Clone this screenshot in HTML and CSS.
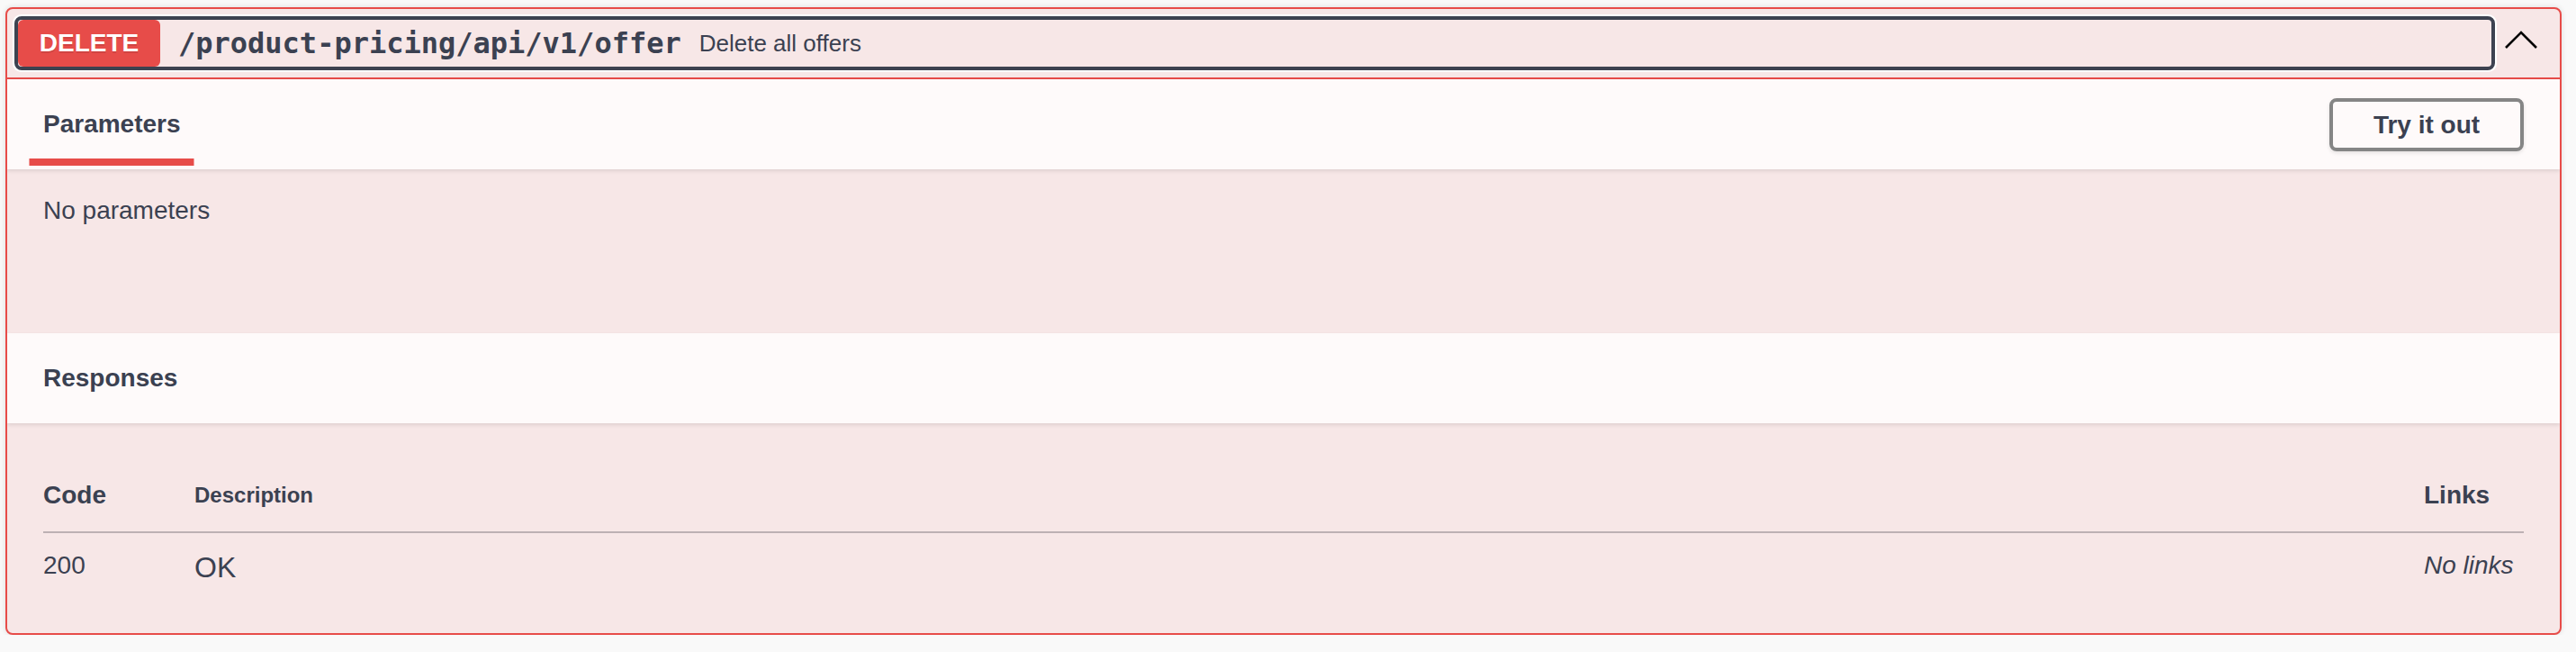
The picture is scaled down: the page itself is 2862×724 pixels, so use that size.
FILE: index.html
```html
<!DOCTYPE html>
<html lang="en">
<head>
<meta charset="utf-8">
<title>DELETE /product-pricing/api/v1/offer</title>
<link rel="stylesheet" href="styles.css">
</head>
<body>
<div class="opblock">
  <div class="summary">
    <button class="summary-control" type="button">
      <span class="method">DELETE</span>
      <span class="path">/product-pricing/api/v1/offer</span>
      <span class="summary-desc">Delete all offers</span>
    </button>
    <button class="arrow" type="button" aria-label="Collapse">
      <svg width="40" height="40" viewBox="0 0 40 40"><polyline points="3,25 20,8 37,25" fill="none" stroke="#000" stroke-width="2.6" stroke-linecap="butt" stroke-linejoin="miter"/></svg>
    </button>
  </div>
  <div class="section-header">
    <div class="tab"><h4><span>Parameters</span></h4></div>
    <button class="try-btn" type="button">Try it out</button>
  </div>
  <div class="params-body">
    <p>No parameters</p>
  </div>
  <div class="section-header">
    <h4 class="resp-title">Responses</h4>
  </div>
  <div class="responses-inner">
    <table class="responses-table">
      <colgroup><col class="c-code"><col><col class="c-links"></colgroup>
      <thead>
        <tr><td class="col-status">Code</td><td class="col-desc">Description</td><td class="col-links">Links</td></tr>
      </thead>
      <tbody>
        <tr><td class="status">200</td><td class="desc">OK</td><td class="links"><i>No links</i></td></tr>
      </tbody>
    </table>
  </div>
</div>
</body>
</html>
```
FILE: styles.css
```css
* { box-sizing: border-box; }
html, body { margin: 0; }
body {
  background: #f9f9f9;
  padding: 8px 16px 0 6px;
  font-family: "Liberation Sans", Arial, sans-serif;
  color: #3b4151;
}
.opblock {
  border: 2px solid #e74c49;
  border-radius: 8px;
  background: #f7e7e7;
  box-shadow: 0 0 6px rgba(0,0,0,.12);
  overflow: hidden;
}
.summary {
  display: flex;
  align-items: center;
  padding: 12px 10px 12px 12px;
  border-bottom: 2px solid #e74c49;
}
.summary-control {
  flex: 1;
  display: flex;
  align-items: center;
  height: 52px;
  padding: 0;
  margin: 0;
  border: 0;
  background: transparent;
  border-radius: 4px;
  outline: 4px solid #3d4250;
  outline-offset: 0;
  box-shadow: 0 0 0 6px #fff;
  text-align: left;
  color: #3b4151;
  font-family: inherit;
}
.method {
  flex: none;
  width: 158px;
  height: 52px;
  line-height: 52px;
  background: #e74c49;
  color: #fff;
  border-radius: 6px;
  font-size: 28px;
  font-weight: 700;
  text-align: center;
  text-shadow: 0 2px 0 rgba(0,0,0,.1);
}
.path {
  padding: 0 20px;
  font-family: "DejaVu Sans Mono", monospace;
  font-weight: 700;
  font-size: 32px;
  color: #3b4151;
}
.summary-desc {
  font-size: 26px;
  color: #3b4151;
}
.arrow {
  flex: none;
  width: 66px;
  height: 52px;
  padding: 0;
  border: 0;
  background: transparent;
  display: flex;
  align-items: center;
  justify-content: center;
}
.arrow svg { display: block; }
.section-header {
  height: 100px;
  padding: 0 40px;
  display: flex;
  align-items: center;
  justify-content: space-between;
  background: rgba(255,255,255,.8);
  box-shadow: 0 2px 4px rgba(0,0,0,.1);
  position: relative;
}
.section-header h4 {
  margin: 0;
  font-size: 28px;
  font-weight: 700;
  line-height: 32px;
}
.tab h4 span { position: relative; display: inline-block; }
.tab h4 span::after {
  content: "";
  position: absolute;
  left: 50%;
  bottom: -30px;
  width: 120%;
  height: 8px;
  transform: translateX(-50%);
  background: #e74c49;
}
.try-btn {
  width: 216px;
  padding: 10px 0;
  border: 4px solid #858585;
  border-radius: 8px;
  background: transparent;
  box-shadow: 0 2px 4px rgba(0,0,0,.1);
  font-family: inherit;
  font-size: 28px;
  font-weight: 700;
  line-height: 31px;
  text-align: center;
  color: #3b4151;
}
.params-body {
  height: 182px;
  padding: 30px 40px;
}
.params-body p {
  margin: 0;
  font-size: 28px;
}
.responses-inner {
  height: 233px;
  padding: 40px;
}
.responses-table {
  width: 100%;
  border-collapse: collapse;
  table-layout: fixed;
}
.c-code { width: 168px; }
.c-links { width: 111px; }
.responses-table thead td {
  padding: 24px 0;
  border-bottom: 2px solid #bdb1b4;
  font-weight: 700;
  font-size: 28px;
  line-height: 32px;
  vertical-align: middle;
}
.responses-table thead td.col-desc { font-size: 24px; }
.responses-table tbody td {
  padding: 20px 0 0 0;
  vertical-align: top;
}
.status { font-size: 28px; }
.desc { font-size: 32px; }
.links { font-size: 28px; }
```
